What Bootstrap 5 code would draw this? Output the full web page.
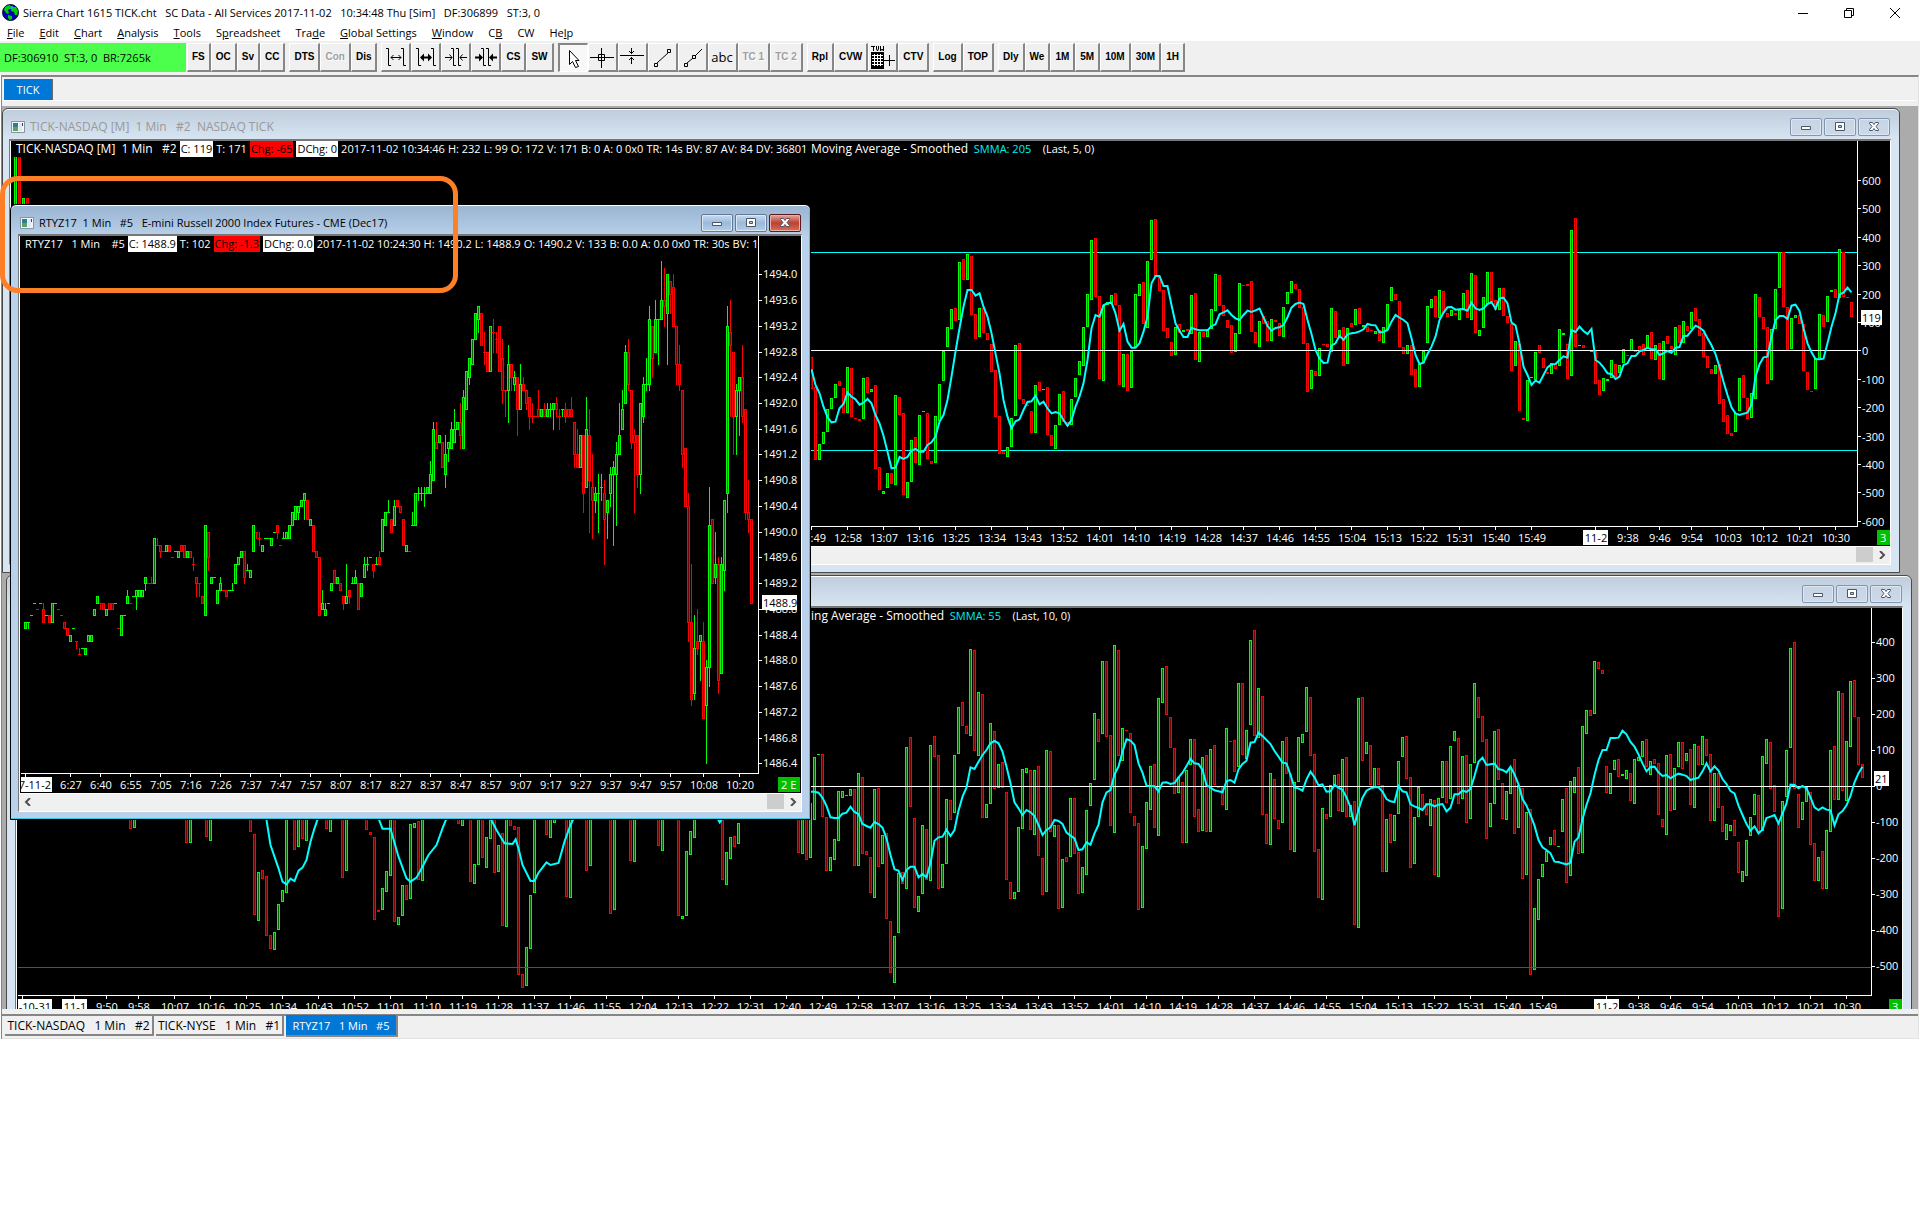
<!DOCTYPE html>
<html lang="en">
<head>
<meta charset="utf-8">
<meta name="viewport" content="width=device-width, initial-scale=1">
<title>Sierra Chart 1615 TICK.cht</title>
<link href="https://cdn.jsdelivr.net/npm/bootstrap@5.3.0/dist/css/bootstrap.min.css" rel="stylesheet">
<style>
  body { font: 11px/16px "Open Sans", "Noto Sans", sans-serif; color: #000; background: #fff; }
  button { font: inherit; color: inherit; }
  .app-title { height: 25px; padding: 0 2px; }
  .app-title h1 { font-size: 11px; line-height: 16px; font-weight: 400; white-space: pre; }
  .sys-btn { width: 46px; height: 21px; border: 0; background: none; padding: 0; }
  .app-menu { height: 16px; gap: 15px; padding-left: 7px; }
  .app-menu a { color: #000; text-decoration: none; }
  .tool-strip { background: #f0f0f0; padding-top: 2px; height: 34px; gap: 4px; }
  .feed-state { width: 186px; height: 29px; margin-right: -3px; padding-left: 4px; background: #4dff4d; white-space: pre; }
  .tool-btn { height: 29px; padding: 0 4px; background: #f0f0f0; border: 1px solid #fff; border-right: 2px solid #868686; border-bottom: 2px solid #868686; font: bold 10px/14px "Liberation Sans", Arial, sans-serif; border-radius: 0; }
  .tool-btn.with-icon { width: 30px; padding: 0; }
  .tool-btn.words { font: 13px/14px "Open Sans", sans-serif; }
  .tool-btn:disabled { color: #a0a0a0; text-shadow: 1px 1px #fff; }
  .tool-btn.pressed { border: 2px solid #868686; border-right: 1px solid #fff; border-bottom: 1px solid #fff; background: #f8f8f8; }
  .tool-btn svg { display: block; margin: 0 auto; }
  .frame-box { border-top: 2px solid #868686; border-left: 1px solid #868686; border-right: 1px solid #e3e3e3; margin: 0 1px; background: #f0f0f0; }
  .book-tabs { height: 29px; padding: 2px 2px 0; }
  .book-tabs .rail { height: 22px; border-bottom: 1px solid #fff; }
  .book-tab { height: 21px; width: 49px; background: #0078d7; color: #fff; border: 0; border-right: 1px solid #696969; padding: 0; }
  .workspace { height: 903px; background: #ababab; }
  .mdi { border: 1px solid #4a4a4a; border-radius: 6px 6px 0 0; background: #d7e4f2; box-shadow: inset 0 1px #fff; padding: 0 8px; }
  .mdi-bar { height: 30px; padding: 6px 1px 0 2px; gap: 5px; color: #999; }
  .mdi-bar h2 { font-size: 12px; line-height: 16px; font-weight: 400; white-space: pre; }
  .mdi.idle { background: linear-gradient(#bfccdb, #d7e4f2 30px); }
  .mdi.live { background: linear-gradient(#99b4d1, #b9d1ea 32px); border-color: #000; box-shadow: inset 0 1px #fff, inset -1px -1px #3cc8e0; }
  .mdi.live .mdi-bar { height: 29px; color: #000; }
  .mdi.live h2 { font-size: 11px; }
  .mdi-tick { left: 0; top: 2px; right: 18px; padding-left: 6px; height: 465px; }
  .mdi-nyse { left: 4px; top: 469px; right: 6px; height: 465px; }
  .mdi-rty { left: 8px; top: 98px; width: 801px; height: 616px; padding-left: 7px; }
  .mdi-btn { width: 32px; height: 18px; border: 1px solid #8494ae; border-radius: 2px; background: linear-gradient(#c7d4e3, #ccd9e8); box-shadow: inset 0 0 0 1px #dde7f2; padding: 0; margin-left: 2px; }
  .mdi-btn svg { display: block; margin: 0 auto; }
  .live .mdi-btn { border-color: #62789b; background: linear-gradient(#c9dbee, #9bb9da 50%, #b5cfeb); }
  .live .mdi-btn.shut { border-color: #5a1a20; background: linear-gradient(#e3a79c, #bb4030 50%, #d6705c); box-shadow: inset 0 0 0 1px #e6b0a6; }
  .mdi-view { border-top: 2px solid #777; border-left: 1px solid #777; border-right: 1px solid #fff; border-bottom: 1px solid #fff; background: #000; }
  .quote-row { height: 16px; width: 0; color: #fff; white-space: pre; overflow: hidden; border-left: 1px solid #fff; padding-left: 5px; }
  .quote-row .fields { gap: 3px; }
  .text-12 { font-size: 12px; }
  .chip-w, .chip-r { color: #000; padding: 0 1px; }
  .chip-w { background: #fff; }
  .chip-r { background: #f00; }
  .smma { color: #00f0f0; }
  .plot-box { overflow: hidden; border-left: 1px solid #fff; }
  .plot-box svg { display: block; flex: none; }
  .plot-box text { font: 11px "Open Sans", "Noto Sans", sans-serif; fill: #fff; }
  .plot-box text.ink { fill: #000; }
  .scroll-row { height: 18px; background: #f0f0f0; border-top: 1px solid #fff; }
  .scroll-row button { width: 17px; height: 16px; border: 0; padding: 0; background: none; }
  .scroll-row svg { display: block; margin: 0 auto; }
  .thumb { width: 17px; height: 15px; background: #cdcdcd; }
  .sheet-foot { height: 30px; border-bottom: 1px solid #e3e3e3; padding-top: 5px; }
  .sheet-foot .rail { border-top: 2px solid #868686; padding-left: 3px; gap: 2px; }
  .sheet-tab { height: 20px; padding: 1px 0 0; border: 0; border-right: 2px solid #868686; border-bottom: 2px solid #868686; background: #f0f0f0; white-space: pre; font-size: 12px; }
  .sheet-tab.on { background: #0078d7; color: #fff; height: 22px; margin-top: -1px; font-size: 11px; }
  .wide-149 { width: 149px; } .wide-128 { width: 128px; } .wide-112 { width: 112px; }
  .lead-795 { flex: 0 0 795px; } .lead-765 { flex: 0 0 765px; }
  .note-ring { left: 0; top: 176px; width: 458px; height: 117px; border: 5px solid #ff7f27; border-radius: 18px; pointer-events: none; z-index: 5; }
</style>
<script src="https://cdn.jsdelivr.net/npm/bootstrap@5.3.0/dist/js/bootstrap.bundle.min.js"></script>
</head>
<body class="position-relative">

<svg class="d-none">
  <symbol id="i-page" viewBox="0 0 14 12"><path fill="#f4f4f4" stroke="#8a94a0" d="M.5.5h13v11H.5z"/><path fill="#2f7f8a" d="M2 2h5v8H2z"/><path fill="#5aa06a" d="M2 6h5v4H2z"/><path fill="#dfe8f2" d="M8 2h3v8H8z"/><path fill="#345" d="M11 2h1v3h-1z"/></symbol>
  <symbol id="i-min" viewBox="0 0 12 10"><path fill="#fff" stroke="#4c5568" d="M1.5 4.5h9v3h-9z"/></symbol>
  <symbol id="i-max" viewBox="0 0 12 10"><path fill="#fff" stroke="#4c5568" d="M1.500.5h9v8h-9z"/><path fill="#b9cce2" stroke="#4c5568" d="M4.5 3.5h3v2h-3z"/></symbol>
  <symbol id="i-shut" viewBox="0 0 12 10"><path fill="#fff" stroke="#4c5568" d="M1.500.5h3L6 2.500 7.500.5h3v1L8 4.500l2.500 3v1h-3L6 6.500l-1.500 2h-3v-1l2.500-3-2.500-3z"/></symbol>
  <symbol id="i-next" viewBox="0 0 8 8"><path fill="none" stroke="#505050" stroke-width="2" d="M2 0l4 4-4 4"/></symbol>
  <symbol id="i-prev" viewBox="0 0 8 8"><path fill="none" stroke="#505050" stroke-width="2" d="M6 0L2 4l4 4"/></symbol>
</svg>

<header>
  <div class="app-title d-flex align-items-center">
    <svg class="me-1" width="17" height="17" viewBox="0 0 17 17" aria-hidden="true"><circle cx="8.5" cy="8.5" r="8" fill="#0000b4" stroke="#101030"/><path fill="#00d200" d="M3 3l4-2 2 1-1 3-2 1 1 3-2 1-3-4zM10 3l4 0 2 4-1 4-2 0-1-3-3-1zM6 11l4 1 0 3-2 1-2-2z"/><path fill="#29a8ff" d="M9 2l2 0-1 3-2 0z"/></svg>
    <h1 class="m-0 flex-grow-1">Sierra Chart 1615 TICK.cht   SC Data - All Services 2017-11-02   10:34:48 Thu [Sim]   DF:306899   ST:3, 0</h1>
    <button class="sys-btn" aria-label="Minimize"><svg class="d-block mx-auto" width="12" height="12"><path stroke="#000" d="M1 6.500h10"/></svg></button>
    <button class="sys-btn" aria-label="Restore"><svg class="d-block mx-auto" width="12" height="12"><path fill="none" stroke="#000" d="M1.500 3.500h7v7h-7zM3.500 3V1.500h7v7H9"/></svg></button>
    <button class="sys-btn" aria-label="Close"><svg class="d-block mx-auto" width="12" height="12"><path stroke="#000" d="M1 1l10 10M11 1L1 11"/></svg></button>
  </div>
  <nav class="app-menu d-flex" aria-label="Main menu">
    <a href="#"><u>F</u>ile</a><a href="#"><u>E</u>dit</a><a href="#"><u>C</u>hart</a><a href="#"><u>A</u>nalysis</a><a href="#"><u>T</u>ools</a><a href="#">S<u>p</u>readsheet</a><a href="#">Tra<u>d</u>e</a><a href="#"><u>G</u>lobal Settings</a><a href="#"><u>W</u>indow</a><a href="#">C<u>B</u></a><a href="#">CW</a><a href="#">He<u>l</u>p</a>
  </nav>
</header>

<div class="tool-strip d-flex align-items-start" role="toolbar" aria-label="Tools">
  <div class="feed-state d-flex align-items-center">DF:306910  ST:3, 0  BR:7265k</div>
  <div class="d-flex"><button class="tool-btn">FS</button><button class="tool-btn">OC</button><button class="tool-btn">Sv</button><button class="tool-btn">CC</button></div>
  <div class="d-flex"><button class="tool-btn">DTS</button><button class="tool-btn" disabled>Con</button><button class="tool-btn">Dis</button></div>
  <div class="d-flex">
    <button class="tool-btn with-icon" aria-label="Widen bars"><svg width="24" height="24"><path fill="none" stroke="#000" d="M2 3.500h2.500v17H7M17 3.500h2.500v17H22M7 12.500h10M9.500 10L7 12.500 9.500 15M14.500 10l2.500 2.500-2.500 2.500"/></svg></button>
    <button class="tool-btn with-icon" aria-label="Widen spacing"><svg width="24" height="24"><path fill="none" stroke="#000" d="M2 3.500h2.500v17H7M17 3.500h2.500v17H22"/><path stroke="#000" stroke-width="2" d="M8 12.500h8"/><path d="M6 12.500l4-4v8zM18 12.500l-4-4v8z"/></svg></button>
    <button class="tool-btn with-icon" aria-label="Narrow bars"><svg width="24" height="24"><path fill="none" stroke="#000" d="M7 3.500h2.500v17H12M12 3.500h2.500v17H17M1 12.500h7M5.500 9.500l2.500 3-2.500 3M23 12.500h-7M18.500 9.500l-2.500 3 2.500 3"/></svg></button>
    <button class="tool-btn with-icon" aria-label="Narrow spacing"><svg width="24" height="24"><path fill="none" stroke="#000" d="M7 3.500h2.500v17H12M12 3.500h2.500v17H17"/><path stroke="#000" stroke-width="2" d="M1 12.500h5M18 12.500h5"/><path d="M9 12.500l-4-4v8zM15 12.500l4-4v8z"/></svg></button>
    <button class="tool-btn">CS</button><button class="tool-btn">SW</button>
  </div>
  <div class="d-flex">
    <button class="tool-btn with-icon pressed" aria-label="Pointer"><svg width="24" height="24"><path fill="#fff" stroke="#000" d="M8.500 4.500v14l3-3 3 6 3-1-3-6h3.500z"/></svg></button>
    <button class="tool-btn with-icon" aria-label="Cross hair"><svg width="26" height="24"><path fill="none" stroke="#000" d="M1 12.500h24M12.500 3v20M9.500 9.500h6v6h-6z"/></svg></button>
    <button class="tool-btn with-icon" aria-label="Horizontal line"><svg width="26" height="24"><path fill="none" stroke="#000" d="M1 10.500h24M12.500 3v6M10 6l2.500 2.500L15 6M12.500 12v7M10 15l2.500-2.500L15 15"/></svg></button>
    <button class="tool-btn with-icon" aria-label="Line"><svg width="24" height="24"><path fill="none" stroke="#000" d="M4.500 18.500h3v3h-3zM17.500 4.500h3v3h-3zM7 18L18 8"/></svg></button>
    <button class="tool-btn with-icon" aria-label="Ray"><svg width="24" height="24"><path fill="none" stroke="#000" d="M4.500 18.500h3v3h-3zM12.500 10.500h3v3h-3zM7 18l6-5M15 11l7-7"/></svg></button>
    <button class="tool-btn with-icon words">abc</button><button class="tool-btn" disabled>TC 1</button><button class="tool-btn" disabled>TC 2</button>
  </div>
  <div class="d-flex">
    <button class="tool-btn">Rpl</button><button class="tool-btn">CVW</button>
    <button class="tool-btn with-icon" aria-label="Trade values window"><svg width="26" height="26"><path d="M1 8h13v17H1z"/><path stroke="#fff" d="M2 11.500h11M2 14.500h11M2 17.500h11M2 20.500h11M4.500 10v12M7.500 10v12M10.500 10v12"/><path fill="none" stroke="#000" d="M13 16.500h12M19.500 11v11M1 2.500h4M3.500 2v5M6.500 2v3l1 2 1-2V2M10.500 2v5l1.500-2 1.500 2V2"/></svg></button>
    <button class="tool-btn">CTV</button>
  </div>
  <div class="d-flex"><button class="tool-btn">Log</button><button class="tool-btn">TOP</button></div>
  <div class="d-flex"><button class="tool-btn">Dly</button><button class="tool-btn">We</button><button class="tool-btn">1M</button><button class="tool-btn">5M</button><button class="tool-btn">10M</button><button class="tool-btn">30M</button><button class="tool-btn">1H</button></div>
</div>

<main class="frame-box">
  <div class="book-tabs"><div class="rail"><button class="book-tab">TICK</button></div></div>

  <div class="workspace position-relative overflow-hidden">

    <section class="mdi idle mdi-tick position-absolute">
      <div class="mdi-bar d-flex align-items-center">
        <svg width="14" height="12"><use href="#i-page"/></svg>
        <h2 class="m-0 flex-grow-1">TICK-NASDAQ [M]  1 Min   #2  NASDAQ TICK</h2>
        <div class="d-flex">
          <button class="mdi-btn" aria-label="Minimize"><svg width="12" height="10"><use href="#i-min"/></svg></button>
          <button class="mdi-btn" aria-label="Maximize"><svg width="12" height="10"><use href="#i-max"/></svg></button>
          <button class="mdi-btn" aria-label="Close"><svg width="12" height="10"><use href="#i-shut"/></svg></button>
        </div>
      </div>
      <div class="mdi-view">
        <div class="d-flex">
          <div class="quote-row flex-grow-1 d-flex">
            <div class="fields lead-795 d-flex"><span class="text-12">TICK-NASDAQ [M]  1 Min   #2</span><span class="chip-w">C: 119</span><span>T: 171</span><span class="chip-r">Chg: -65</span><span class="chip-w">DChg: 0</span><span>2017-11-02 10:34:46</span><span>H: 232</span><span>L: 99</span><span>O: 172</span><span>V: 171</span><span>B: 0</span><span>A: 0 0x0</span><span>TR: 14s</span><span>BV: 87</span><span>AV: 84</span><span>DV: 36801</span></div>
            <span class="text-12">Moving Average - Smoothed</span><span class="smma">  SMMA: 205</span><span>    (Last, 5, 0)</span>
          </div>
          <svg width="33" height="16"><path stroke="#fff" d="M.5 0v16"/></svg>
        </div>
        <div class="plot-box d-flex justify-content-end"><svg id="plot-tick" width="1879" height="389" viewBox="11 157 1879 389"></svg></div>
        <div class="scroll-row d-flex"><button class="me-auto" aria-label="Scroll left"><svg width="8" height="8"><use href="#i-prev"/></svg></button><div class="thumb"></div><button aria-label="Scroll right"><svg width="8" height="8"><use href="#i-next"/></svg></button></div>
      </div>
    </section>

    <section class="mdi idle mdi-nyse position-absolute">
      <div class="mdi-bar d-flex align-items-center">
        <svg width="14" height="12"><use href="#i-page"/></svg>
        <h2 class="m-0 flex-grow-1">TICK-NYSE  1 Min   #1</h2>
        <div class="d-flex">
          <button class="mdi-btn" aria-label="Minimize"><svg width="12" height="10"><use href="#i-min"/></svg></button>
          <button class="mdi-btn" aria-label="Maximize"><svg width="12" height="10"><use href="#i-max"/></svg></button>
          <button class="mdi-btn" aria-label="Close"><svg width="12" height="10"><use href="#i-shut"/></svg></button>
        </div>
      </div>
      <div class="mdi-view">
        <div class="d-flex">
          <div class="quote-row flex-grow-1 d-flex">
            <span class="lead-765">TICK-NYSE  1 Min   #1</span><span class="text-12">Moving Average - Smoothed</span><span class="smma">  SMMA: 55</span><span>    (Last, 10, 0)</span>
          </div>
          <svg width="31" height="16"><path stroke="#fff" d="M.5 0v16"/></svg>
        </div>
        <div class="plot-box d-flex justify-content-end"><svg id="plot-nyse" width="1884" height="405" viewBox="17 624 1884 405"></svg></div>
      </div>
    </section>

    <section class="mdi live mdi-rty position-absolute">
      <div class="mdi-bar d-flex align-items-center">
        <svg width="14" height="12"><use href="#i-page"/></svg>
        <h2 class="m-0 flex-grow-1">RTYZ17  1 Min   #5   E-mini Russell 2000 Index Futures - CME (Dec17)</h2>
        <div class="d-flex">
          <button class="mdi-btn" aria-label="Minimize"><svg width="12" height="10"><use href="#i-min"/></svg></button>
          <button class="mdi-btn" aria-label="Maximize"><svg width="12" height="10"><use href="#i-max"/></svg></button>
          <button class="mdi-btn shut" aria-label="Close"><svg width="12" height="10"><use href="#i-shut"/></svg></button>
        </div>
      </div>
      <div class="mdi-view">
        <div class="d-flex">
          <div class="quote-row flex-grow-1 d-flex">
            <div class="fields d-flex"><span>RTYZ17   1 Min    #5</span><span class="chip-w">C: 1488.9</span><span>T: 102</span><span class="chip-r">Chg: -1.3</span><span class="chip-w">DChg: 0.0</span><span>2017-11-02 10:24:30</span><span>H: 1490.2</span><span>L: 1488.9</span><span>O: 1490.2</span><span>V: 133</span><span>B: 0.0</span><span>A: 0.0 0x0</span><span>TR: 30s</span><span>BV: 105</span></div>
          </div>
          <svg width="43" height="16"><path stroke="#fff" d="M.5 0v16"/></svg>
        </div>
        <div class="plot-box d-flex justify-content-end"><svg id="plot-rty" width="780" height="541" viewBox="21 252 780 541"></svg></div>
        <div class="scroll-row d-flex"><button class="me-auto" aria-label="Scroll left"><svg width="8" height="8"><use href="#i-prev"/></svg></button><div class="thumb"></div><button aria-label="Scroll right"><svg width="8" height="8"><use href="#i-next"/></svg></button></div>
      </div>
    </section>
  </div>

  <footer class="sheet-foot">
    <div class="rail d-flex"><button class="sheet-tab wide-149">TICK-NASDAQ   1 Min   #2</button><button class="sheet-tab wide-128">TICK-NYSE   1 Min   #1</button><button class="sheet-tab wide-112 on">RTYZ17   1 Min   #5</button></div>
  </footer>
</main>
<div class="note-ring position-absolute"></div>

<script>
const NS = 'http://www.w3.org/2000/svg';
function add(svg, tag, attrs, text) {
  const el = document.createElementNS(NS, tag);
  for (const k in attrs) el.setAttribute(k, attrs[k]);
  if (text !== undefined) el.textContent = text;
  svg.appendChild(el);
  return el;
}
const BRIGHT = { g: '#00ff00', r: '#ff0000' }, DARK = { g: '#006a00', r: '#780000' };
const box = (s, x, y, w, h, fill) => add(s, 'rect', { x, y, width: w, height: h, fill });
function bar(s, x, y, h, c) {
  box(s, x, y, 3, h, BRIGHT[c]);
  if (h > 2) box(s, x + 1, y + 1, 1, h - 2, DARK[c]);
}
const label = (s, x, y, t, anchor, cls) => add(s, 'text', { x, y, 'text-anchor': anchor || 'start', class: cls || '' }, t);

// Bars are listed as colour, top-bottom, in thirds of a pixel below the pane origin.
function tickBars(s, x0, y0, start, list) {
  list.trim().split(/\s+/).forEach((b, i) => {
    const m = b.match(/^(?:@(-?\d+))?([gr])(-?\d+)-(\d+)$/);
    if (!m) return;
    if (m[1]) start = +m[1] - i;
    const top = Math.round(y0 + m[3] / 3), bot = Math.round(y0 + m[4] / 3);
    bar(s, x0 + 4 * (start + i), top, Math.max(1, bot - top), m[2]);
  });
}
function smma(s, x0, y0, pts) {
  add(s, 'polyline', { points: pts.map(p => (x0 + 4 * p[0]) + ',' + (y0 + p[1] / 3)).join(' '), fill: 'none', stroke: '#00ffff', 'stroke-width': 2 });
}
const series = (start, str) => str.trim().split(/\s+/).map((v, i) => [start + i, +v]);
function clock(k) { const t = 12 * 60 + 49 + k; return Math.floor(t / 60) + ':' + String(t % 60).padStart(2, '0'); }
function timeAxis(s, x0, y, from, base) {
  const marks = [];
  for (let k = from; k <= 180; k += 9) marks.push([k, clock(k)]);
  marks.push([204, '9:38'], [212, '9:46'], [220, '9:54'], [229, '10:03'], [238, '10:12'], [247, '10:21'], [256, '10:30']);
  marks.forEach(([k, t]) => { box(s, x0 + 4 * k, y, 1, 4, '#fff'); label(s, x0 + 4 * k + 1, base, t, 'middle'); });
  dateBox(s, x0 + 4 * 196, y, base, 25, '11-2');
}
function dateBox(s, x, y, base, w, t) {
  box(s, x, y, 1, 4, '#fff');
  box(s, x - Math.floor(w / 2), base - 12, w, 15, '#fff');
  label(s, x + 1, base, t, 'middle', 'ink');
}

// ---- TICK-NASDAQ
{
  const s = document.getElementById('plot-tick');
  box(s, 11, 252, 1846, 1, '#00ffff'); box(s, 11, 450, 1846, 1, '#00ffff');
  tickBars(s, 810, 200, -199, 'g-132-60 r-132-60 g-5-60 r-5-60');
  tickBars(s, 810, 200, 0, `
r472-566 r562-779 g733-781 g697-733 g628-697 g595-628 g553-595 r544-559 r565-638 g502-638 r505-650 r655-658 r658-664 g535-658 r532-578 g568-577
r556-808 r802-871 g874-883 g820-865 r820-853 g586-856 r592-646 r640-886 g847-895 g721-847 r712-790 g646-796 g634-634 r640-778 r784-793 g649-790
g553-664 g454-544 g382-442 g328-388 r325-364 g187-361 r178-241 g163-241 r169-346 r343-418 g325-412 r325-400 r400-421 r433-517 r511-652 r649-763
r754-763 g742-772 g655-742 g436-649 r430-598 r598-613 r616-619 r634-700 g556-700 r547-574 g568-571 r562-706 r706-739 g676-748 g583-676 r574-667
r667-679 g598-676 g535-592 g484-526 g382-499 g283-382 g121-301 r115-292 r289-538 g316-544 g307-316 g286-310 r280-316 r316-556 g463-562 r463-574
g454-565 g283-442 g253-289 r247-373 g184-385 g61-181 r58-232 r229-274 r271-394 r385-415 r427-469 g382-466 r373-400 g391-397 r388-394 g286-403
r280-481 g397-487 r397-412 g388-412 g328-388 g223-334 r226-319 r316-349 r361-385 r376-460 g400-457 g250-403 r256-256 r253-259 r244-397 r397-430
g364-442 r349-373 r364-424 g358-424 r361-367 r370-409 g322-412 g277-313 g244-280 r253-268 r268-325 r322-433 r430-577 g511-568 r514-529 g445-529
r433-436 r433-442 g325-457 r334-415 g391-412 r382-499 g385-493 r370-382 g328-376 r325-373 g376-382 r382-397 r391-391 g394-403 r391-424 g382-430
g313-391 g262-304 r283-301 r304-442 r442-463 g436-463 r436-526 r508-562 g493-562 g454-490 g319-430 g298-325 r289-352 g271-355 r274-340 r340-352
g331-349 r340-346 g331-361 g280-331 r271-355 g220-361 r226-400 g391-409 g292-385 g217-313 r217-313 r301-331 g265-331 r265-349 r349-370 r373-514
g424-499 r433-634 r655-661 g541-664 g532-535 g457-541 r436-460 r475-505 r517-523 g490-523 r493-508 g388-499 g400-406 r433-538 g91-529 r55-442
g436-439 r436-445 r451-454 g454-454 r454-553 r541-586 g535-574 g538-544 g481-535 r493-532 g496-520 g448-490 r466-466 g418-454 r454-454 r439-454
r433-466 g406-448 r397-478 g436-481 r430-538 g424-541 r409-433 r439-448 g382-466 r376-430 g364-430 r379-394 g337-388 r325-364 r358-409 r400-472
r469-505 r508-523 g496-523 r493-613 r598-667 r646-703 r700-709 g640-697 g535-634 r526-595 r595-658 g580-655 g283-598 r292-352 r352-388 r382-553
g388-541 g268-388 g157-265 r157-322 r322-451 g355-448 g346-355 r346-373 r373-514 r517-571 r574-577 g475-568 g343-475 r346-382 g289-367 g271-277
r268-295 g148-295 r157-292 r292-295 r307-352`);
  box(s, 11, 350, 1846, 1, '#fff');
  smma(s, 811.5, 200, series(0, `508 555 580 620 652 667 665 625 612 577 590 598 614 608 597 610 645 670 707 755 805 803 771 777 771 752 747 755 755 735 727 710 665 645 600 530 455 385 320 270 270 287 280 320 350 400 460 520 600 650 685 664 658 630 606 604 587 613 605 625 640 636 640 660 677 660 620 590 550 480 385 345 350 316 310 308 340 392 372 425 443 443 430 395 350 250 228 228 258 258 315 370 392 411 411 383 388 391 391 391 378 373 343 337 331 345 355 360 345 332 336 331 326 352 378 392 384 382 375 352 323 312 308 312 360 402 450 475 489 488 436 430 407 420 403
400 398 394 388 372 375 376 397 396 390 365 345 353 360 370 415 465 492 488 462 440 410 360 338 322 321 329 328 327 332 308 325 330 325 312 306 326 295 293 310 368 376 430 500 525 555 542 548 525 502 493 492 480 469 473 390 396 380 393 402 387 480 488 502 520 522 537 530 495 490 468 468 454 450 443 448 448 465 460 453 458 443 441 408 407 392 377 383 392 415 436 462 500 545 585 622 640 645 641 638 615 530 493 472 470 410 360 348 348 357 317 314 333 385 430 457 477 478 476 430 380 340 283 278 263 277`));
  box(s, 1857, 157, 1, 370, '#fff'); box(s, 11, 526, 1847, 1, '#fff');
  for (let v = 6; v >= -5; v--) {
    const y = Math.round(351.3 - v * 28.4);
    box(s, 1857, y - 1, 4, 1, '#fff'); label(s, 1862, y + 4, v * 100);
  }
  box(s, 1857, 521, 4, 1, '#fff');
  const cut = add(s, 'svg', { x: 1862, y: 512, width: 28, height: 14, viewBox: '1862 512 28 14' });
  label(cut, 1862, 526, '-600');
  box(s, 1861, 310, 21, 15, '#fff'); label(s, 1862, 322, '119', 'start', 'ink');
  timeAxis(s, 811, 526, 0, 542);
  box(s, 1877, 530, 13, 15, '#00c000'); label(s, 1880, 542, '3');
}

// ---- TICK-NYSE
{
  const s = document.getElementById('plot-nyse');
  tickBars(s, 820, 570, -5, `
g700-853 r700-871 g700-865 g562-751 g553-553 r553-742 r742-904 g862-904 g808-871 g664-814 g664-685 g676-676 g658-679 r658-889 g610-889 r622-853
r844-856 r862-970 g658-985 r655-892 g796-883 r790-1048 r1054-1210 g1099-1240 g910-1090 r905-943 g532-958 r502-712 r745-1015 g979-1027 g766-973 r778-931
g526-934 r499-562 r556-958 g883-955 g688-883 r691-751 g556-730 g412-553 r397-469 r469-493 g238-499 r241-544 g367-559 r373-745 g703-745 g460-703
r484-658 g583-655 r577-655 r667-931 r937-988 g967-988 g772-967 g598-778 g595-610 r601-781 g601-796 r589-859 r865-976 g541-967 r544-787 g766-802
r766-1018 g868-1015 r862-877 g685-862 r685-853 r847-973 g892-970 g721-916 g640-709 g430-631 r448-517 g274-493 r274-502 r496-769 g226-790 r241-559
g475-574 r481-481 r490-730 r739-769 r760-1021 g829-1015 g697-838 g589-721 r583-775 g385-799 g295-400 r289-436 r442-535 r535-673 g622-670 r637-820
g601-820 g508-586 r508-742 r718-787 g562-784 r556-787 g538-787 r526-646 r652-655 r652-706 g475-721 r514-514 r511-607 g340-590 r340-556 g481-568
g211-466 r181-499 g355-505 r379-736 r733-823 g610-826 r628-748 r751-778 g514-760 r502-613 r613-841 g637-847 g502-637 g493-520 g352-487 r382-559
r553-847 r838-985 g715-991 r733-748 g646-742 g616-646 r613-724 g568-727 r562-742 g706-742 r694-1066 g385-1075 r382-574 g517-553 r526-646 g595-655
r595-646 r646-907 g748-907 r733-820 g736-814 g574-733 g502-562 r499-628 r622-895 g742-883 g652-742 r673-718 r700-736 g688-769 r691-916 g685-922
g574-685 r574-700 g529-688 g484-514 r505-703 g559-688 r556-760 g583-748 g340-580 r382-445 r439-517 r508-808 g700-772 g484-703 r478-631 r640-748
g664-751 g598-673 r568-793 g646-775 r655-928 g727-916 r718-1216 g1015-1201 g928-1051 g883-922 g844-877 g802-826 r781-826 g829-832 g688-787 r655-940
g634-919 g622-670 r592-853 g469-850 g421-493 r421-439 g274-433 r277-298 r301-313 r589-670 g610-673 g571-601 r568-622 g613-619 g601-628 r610-694
g568-703 g562-574 g514-562 r508-592 g574-616 r568-583 r580-736 r748-772 g556-796 r553-724 g595-721 g517-592 r517-598 g550-574 r538-706 g523-715
r529-586 g499-586 r508-559 r553-754 g610-754 r610-715 r709-787 g763-811 g766-784 r751-799 r817-910 g904-937 g811-919 g742-799 g673-736 r676-787
g559-784 g508-583 r517-658 r646-727 r754-1042 g694-1018 g541-682 g235-535 r217-658 r673-775 g697-751 g652-697 r667-826 r820-934 g862-934 r844-958
g781-958 g541-787 r529-691 g364-691 r370-664 g514-694 g334-532 r331-442 r442-586 r583-625`);
  tickBars(s, 820, 600, 0, `
@-173r600-688 g600-683 @-159r600-728 g600-728 @-154r600-710 g600-724 @-143r600-695 r703-946 g817-962 r811-838 r829-1009 r1006-1046 g997-1051
g913-991 g871-907 g600-880 @-132r600-751 g600-742 r600-718 g600-724 @-124r600-688 g600-697 @-120r600-835 g600-814 @-114r600-691 r695-706 r712-961
r931-937 g865-931 g814-877 g600-829 r600-967 g952-976 g856-949 r856-901 g673-898 g670-683 r664-841 g600-844 @-91r600-671 g600-677 @-88r600-847
g793-853 g600-796 r600-775 g712-805 g600-718 r600-820 g736-817 r700-979 g600-982 r600-677 r677-691 r682-1126 r1123-1165 g1042-1159 g886-1046
g600-880 @-69r600-706 g600-715 g600-668 @-64r600-892 g600-895 @-59r600-814 g600-799 @-53r600-943 g600-931 @-48r600-784 g600-787 @-41r600-739
g600-754 @-36r600-949 g949-958 g754-949 g694-766 g600-715 @-25r600-841 g757-856 g712-778 r709-742 g670-733 @-6r600-760`);
  box(s, 17, 786, 1854, 1, '#fff'); box(s, 17, 967, 1854, 1, '#008c00');
  [
    [[-139,750],[-138,825],[-136,895],[-135,935],[-134,943],[-133,926],[-132,933],[-131,902],[-130,893],[-129,870],[-128,815],[-127,775],[-126,740]],
    [[-111,745],[-110,776],[-108,776],[-106,860],[-104,925],[-103,935],[-101.5,923],[-100,890],[-98.5,855],[-96.5,825],[-95,775],[-94,745]],
    [[-83,745],[-81.5,780],[-79.5,820],[-77.5,822],[-76.7,808],[-76,835],[-75,885],[-73,933],[-72,933],[-71,908],[-69,877],[-68,885],[-66,879],[-64.5,815],[-63,765],[-62,740]],
    [[-26.5,740],[-25.7,757],[-25,745]]
  ].forEach(p => smma(s, 821.5, 570, p));
  smma(s, 821.5, 570, series(-3, `665 665 668 683 708 742 744 744 731 728 710 726 732 762 768 773 756 762 773 805 855 898 902 930 900 890 890 922 912 922 880 812 802 800 779 798 780 722 680 653 592 597 575 555 540 520 513 520 545 590 640 697 715 735 720 727 738 765 795 780 772 750 753 762 788 797 805 840 838 817 824 790 765 697 667 660 613 590 545 508 512 525 580 608 647 648 649 664 638 637 642 639 622 608 588 567 580 582 600 645 653 661 664 667 633 630 638 598 582 572 518 516 488 498 510 522 543 560 578 580 615 653 655 662 628 605 622 646 643 665 664 645 653 660 682 712 766
720 683 662 655 652 652 665 687 694 696 648 664 667 703 709 714 720 703 703 709 704 702 724 713 673 673 662 666 657 618 575 563 585 583 581 597 600 607 590 613 643 687 707 735 767 810 832 840 850 875 876 880 883 878 815 802 748 705 670 615 570 540 540 504 504 503 482 493 516 530 553 580 604 591 590 607 618 615 625 617 611 614 618 630 626 623 604 580 604 589 602 627 642 663 670 707 735 762 782 769 790 779 744 740 735 760 730 700 644 645 655 648 655 682 712 720 712 719 721 766 733 723 706 678 637 610 590`));
  box(s, 1870, 624, 1, 372, '#fff'); box(s, 17, 995, 1854, 1, '#fff');
  for (let v = 4; v >= -5; v--) {
    const y = Math.round(786.3 - v * 36);
    box(s, 1870, y, 4, 1, '#fff'); label(s, 1875, y + 4, v * 100);
  }
  box(s, 1873, 771, 15, 15, '#fff'); label(s, 1874, 783, '21', 'start', 'ink');
  timeAxis(s, 821, 995, -162, 1011);
  [[-171, '9:58'], [-179, '9:50']].forEach(([k, t]) => { box(s, 821 + 4 * k, 995, 1, 4, '#fff'); label(s, 822 + 4 * k, 1011, t, 'middle'); });
  dateBox(s, 821 - 4 * 187, 995, 1011, 25, '11-1');
  box(s, 21, 995, 1, 4, '#fff'); box(s, 17, 999, 34, 15, '#fff'); label(s, 50, 1011, '-10-31', 'end', 'ink');
  box(s, 1888, 999, 13, 15, '#00c000'); label(s, 1891, 1011, '3');
}

// ---- RTYZ17: colour, open/close range, then optional high (^) and low (_), in tenths above 1480
{
  const s = document.getElementById('plot-rty');
  const Y = t => Math.round(602.5 - (t - 89) * 6.435);
  `g86-85 g86_85 g87 g89 r88 g89 r88-86^89 g87 r87-86 g89-86 g89 r88 r87 r86-85 r85-84 g84-83 g85 r83_82 r81^82 g82 g82-81 g84-83 g84-83 g88-87 g90-89 r89_88 r89-88 g88-87 r89-88 r89-88
g89 r85 g87-84 g87 g90-89^91 r89 g90 g91-90_88 g91-90 g91-90 g93-92_91 r92 r92^93 g99-92 r98^99 r98-97_96 r97 g98-97 r98-97 r96 g97 g97-96 r98-97 r98-96 g97-96 r97-96 r95^96_94 r93-92_90 r92_90 r90-89
g101-87 r100-96_94 g93-92 g93 g91-89 g92-91^93 r91 r91-90 g91 g91^92 g95-92 g96-95 g97-96 r97-93_92 g94^95 g94-93 g101-97 r100_99 r99^100_98 g98-97 g99 g99 g99-98 g100 r101-100_99 r98 g99^100 g100-99 g101-99 g103-101
g104-102 g104-103_102 g105-104 g106-105_102 r105-102 g102-101 r101-97 r97-96 r96-87 g89-88^91 g88-87^89 g89 g92-91 r94-92 g93-92 r92-91 r90-89_88 g90-89^95 r91-90_89 g92^93 g93-92^94 r92-88 g92-90 g95-93^96 g95^96_94 g96 r95-94_93 g95^96 r96-95^97 g102-97
g103-101 g103^105 r102-100 g104-101^105 r105-104 r104-103 r102-98 g98-97 r97 g101^103 g106-101 g106^107_105 g106^107_105 g106^107_104 g107-106 g109-106^111 g116-108^117 r114-113^117 g115-114 r114-110 g112-109^115_107 g114-113_111 g116-113^117 g116-114^119 g117-116 r117-115^120_113 g121-113^122 g125-119 g127-124_123 g130-126
g134-130 g135-133_131 r134-129 r128^131_126 r128-125 g132-125 r131^133_128 r130^131_128 r132-125 r127-122^130_120 r122_118 g126-122^129_117 r126-124_122 g124-123^125_122 r124-119_115 g123-119^126 r123-122^124 r122-120_119 r121-118_116 r118^120_117 r118 r119-118^122 g119-118 r119-118^120 g119-118^120 g119^120_118 g120-119_116 r120-119^121_118 r118^119_116 g119_118
r119-118^120_117 r119-118 r119-118^121 r117-112_110 r112-110^116 g115-110 r115-106_103 g116-107^121 r115-108^119_100 r107-105^112_99 g106-105^107_103 g106^109_100 g107^109_105 r106-102^108_95 g105-103_99 g109-106^110_104 g110-109^111_98 g112-109^114_101 g115-112^120 g119-116^122 g128-120^129 r128-123^130_122 r122-114_113 r115-114^116_103 r115-109_107 g120-109_106 g123-118^124_117 g123^127_122 g133-123^135_122 r132-127_124
g133-128^136 g133_126 g136-133^142 r136-135^141_132 g140-134_126 r139-137_134 r138-132^140 r132-126_123 r126-123^129_122 r122-112_110 r113-104 r104-86^106_83 r86-74^95_73 g82-75^87_74 r83-82^88_81 g84-83_77 r83-71^86 g79-73^80_64 g101-79^107_76 r102-92 g95-93^100_92 r95-77^96_75 g95-78^96 g105-94_91 g132-106^135_103 r131-129^136_118 r128-118_112 g122-118^123_112 g124-122_115 r124-118^129_117
r119-103_102 r103-102^108_100 r102-89`.split(/\s+/).forEach((c, j) => {
    const m = c.match(/^([gr])(\d+)(?:-(\d+))?(?:\^(\d+))?(?:_(\d+))?$/);
    const top = +m[2], bot = +(m[3] || m[2]), hi = +(m[4] || top), lo = +(m[5] || bot), x = 24 + 3 * j;
    box(s, x + 1, Y(hi), 1, Y(lo) - Y(hi) + 1, BRIGHT[m[1]]);
    bar(s, x, Y(top), Y(bot) - Y(top) + 1, m[1]);
  });
  box(s, 758, 252, 1, 522, '#fff'); box(s, 21, 773, 738, 1, '#fff');
  for (let i = 0; i < 20; i++) {
    const y = Math.round(274.3 + i * 25.74);
    box(s, 758, y, 4, 1, '#fff'); label(s, 763, y + 4, (1494 - i * 0.4).toFixed(1));
  }
  box(s, 762, 595, 35, 15, '#fff'); label(s, 763, 607, '1488.9', 'start', 'ink');
  '6:27 6:40 6:55 7:05 7:16 7:26 7:37 7:47 7:57 8:07 8:17 8:27 8:37 8:47 8:57 9:07 9:17 9:27 9:37 9:47 9:57'.split(' ')
    .map((t, i) => [70 + 30 * i, t]).concat([[703, '10:08'], [739, '10:20']])
    .forEach(([x, t]) => { box(s, x, 773, 1, 4, '#fff'); label(s, x + 1, 789, t, 'middle'); });
  box(s, 25, 773, 1, 4, '#fff');
  box(s, 21, 777, 31, 15, '#fff'); label(s, 51, 789, '7-11-2', 'end', 'ink');
  box(s, 778, 777, 22, 15, '#00c000'); label(s, 781, 789, '2 E');
}
</script>
</body>
</html>
